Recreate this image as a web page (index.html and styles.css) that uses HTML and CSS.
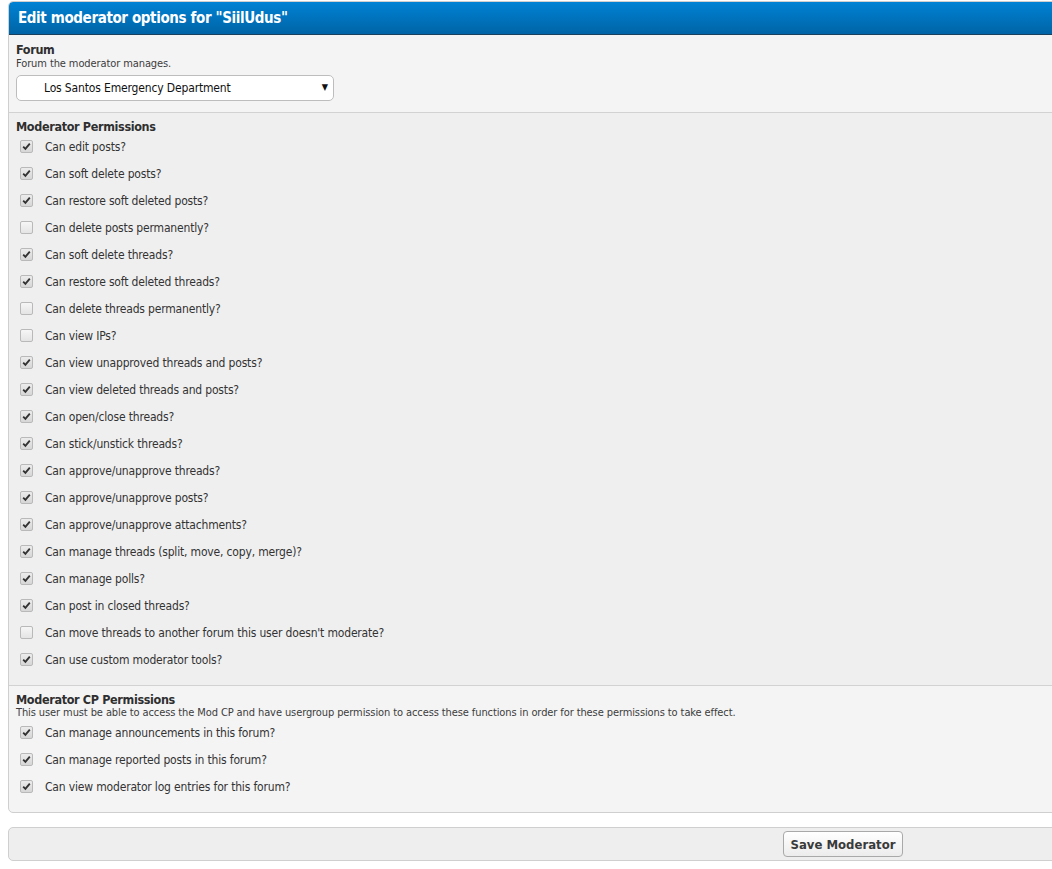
FILE: index.html
```html
<!DOCTYPE html>
<html>
<head>
<meta charset="utf-8">
<title>Edit moderator options</title>
<link rel="stylesheet" href="styles.css">
</head>
<body>
<div class="page">
  <form class="panel">
    <h1 class="panel-head">Edit moderator options for "SiilUdus"</h1>

    <div class="section section-forum">
      <div class="sec-title">Forum</div>
      <div class="sec-desc">Forum the moderator manages.</div>
      <div class="select-wrap">
        <select class="select">
          <option>Los Santos Emergency Department</option>
        </select>
      </div>
    </div>

    <div class="section section-perms">
      <div class="sec-title">Moderator Permissions</div>
      <ul class="checks">
        <li class="check on"><span class="box"></span>Can edit posts?</li>
        <li class="check on"><span class="box"></span>Can soft delete posts?</li>
        <li class="check on"><span class="box"></span>Can restore soft deleted posts?</li>
        <li class="check"><span class="box"></span>Can delete posts permanently?</li>
        <li class="check on"><span class="box"></span>Can soft delete threads?</li>
        <li class="check on"><span class="box"></span>Can restore soft deleted threads?</li>
        <li class="check"><span class="box"></span>Can delete threads permanently?</li>
        <li class="check"><span class="box"></span>Can view IPs?</li>
        <li class="check on"><span class="box"></span>Can view unapproved threads and posts?</li>
        <li class="check on"><span class="box"></span>Can view deleted threads and posts?</li>
        <li class="check on"><span class="box"></span>Can open/close threads?</li>
        <li class="check on"><span class="box"></span>Can stick/unstick threads?</li>
        <li class="check on"><span class="box"></span>Can approve/unapprove threads?</li>
        <li class="check on"><span class="box"></span>Can approve/unapprove posts?</li>
        <li class="check on"><span class="box"></span>Can approve/unapprove attachments?</li>
        <li class="check on"><span class="box"></span>Can manage threads (split, move, copy, merge)?</li>
        <li class="check on"><span class="box"></span>Can manage polls?</li>
        <li class="check on"><span class="box"></span>Can post in closed threads?</li>
        <li class="check"><span class="box"></span>Can move threads to another forum this user doesn't moderate?</li>
        <li class="check on"><span class="box"></span>Can use custom moderator tools?</li>
      </ul>
    </div>

    <div class="section section-cp">
      <div class="sec-title">Moderator CP Permissions</div>
      <div class="sec-desc">This user must be able to access the Mod CP and have usergroup permission to access these functions in order for these permissions to take effect.</div>
      <ul class="checks">
        <li class="check on"><span class="box"></span>Can manage announcements in this forum?</li>
        <li class="check on"><span class="box"></span>Can manage reported posts in this forum?</li>
        <li class="check on"><span class="box"></span>Can view moderator log entries for this forum?</li>
      </ul>
    </div>
  </form>

  <div class="submit-bar">
    <button type="button" class="btn">Save Moderator</button>
  </div>
</div>
</body>
</html>
```

FILE: styles.css
```css
html, body {
  margin: 0;
  padding: 0;
  background: #ffffff;
  overflow: hidden;
}

body {
  font-family: "DejaVu Sans Condensed", "DejaVu Sans", sans-serif;
  font-size: 12px;
  color: #333333;
}

.page {
  width: 1100px;
  padding: 1px 0 0 8px;
}

.panel {
  display: block;
  margin: 0;
  border: 1px solid #cfcfcf;
  border-radius: 5px;
  background: #f4f4f4;
  overflow: hidden;
}

.panel-head {
  margin: 0;
  height: 32px;
  padding-left: 9px;
  line-height: 32px;
  font-size: 15px;
  font-weight: bold;
  letter-spacing: -0.38px;
  color: #ffffff;
  background: linear-gradient(#0082d4, #0064a6);
  border-bottom: 1px solid #19405c;
  border-radius: 4px 4px 0 0;
}

.section {
  padding: 6px 7px 11px;
}

.section + .section {
  border-top: 1px solid #d2d2d2;
}

.section-perms {
  background: #efefef;
  padding-bottom: 12px;
}

.section-cp {
  padding-bottom: 12px;
}

.sec-title {
  height: 15px;
  line-height: 15px;
  font-size: 12.5px;
  font-weight: bold;
  letter-spacing: -0.35px;
  color: #2f2f2f;
}

.section-perms .sec-title {
  height: 14px;
}

.section-forum .sec-title {
  margin-top: 1px;
}

.sec-desc {
  line-height: 13px;
  font-size: 11px;
  letter-spacing: -0.1px;
  color: #3c3c3c;
}

.section-cp .sec-desc {
  line-height: 12px;
}

.select-wrap {
  position: relative;
  width: 318px;
  margin-top: 5px;
}

.select {
  display: block;
  width: 318px;
  height: 26px;
  padding: 0 0 0 27px;
  border: 1px solid #bdbdbd;
  border-radius: 5px;
  background: #ffffff;
  font-family: inherit;
  font-size: 12px;
  letter-spacing: -0.15px;
  color: #111111;
  -webkit-appearance: none;
  appearance: none;
}

.select-wrap::after {
  content: "\25BC";
  position: absolute;
  right: 6px;
  top: 7px;
  font-size: 9px;
  color: #111111;
  pointer-events: none;
}

.checks {
  list-style: none;
  margin: 0;
  padding: 0;
}

.check {
  display: flex;
  align-items: center;
  height: 27px;
  padding-left: 4px;
  letter-spacing: -0.17px;
  color: #333333;
}

.box {
  width: 11px;
  height: 11px;
  margin-right: 12px;
  border: 1px solid #b9b9b9;
  border-radius: 2px;
  background: linear-gradient(#f6f6f6, #e4e4e4);
  flex: none;
}

.check.on .box {
  background:
    url("data:image/svg+xml,%3Csvg xmlns='http://www.w3.org/2000/svg' width='11' height='11' viewBox='0 0 11 11'%3E%3Cpath d='M2.2 5.6 L4.4 7.8 L8.8 2.6' fill='none' stroke='%23333' stroke-width='1.9'/%3E%3C/svg%3E") no-repeat center,
    linear-gradient(#ececec, #d6d6d6);
}

.submit-bar {
  margin-top: 14px;
  padding: 3px 0 0 774px;
  box-sizing: border-box;
  height: 34px;
  border: 1px solid #cfcfcf;
  border-radius: 5px;
  background: #eeeeee;
}

.btn {
  display: block;
  height: 26px;
  width: 120px;
  padding: 0;
  border: 1px solid #a9a9a9;
  border-radius: 4px;
  background: linear-gradient(#ffffff, #ececec);
  font-family: inherit;
  font-size: 13px;
  font-weight: bold;
  color: #3a3a3a;
}
```
